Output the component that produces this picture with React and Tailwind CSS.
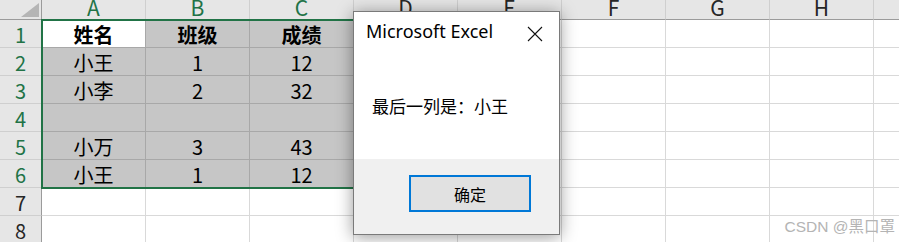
import React from "react";

const cols = ["A", "B", "C", "D", "E", "F", "G", "H", "I"];
const data = {
  1: ["姓名", "班级", "成绩"],
  2: ["小王", "1", "12"],
  3: ["小李", "2", "32"],
  4: ["", "", ""],
  5: ["小万", "3", "43"],
  6: ["小王", "1", "12"],
  7: ["", "", ""],
  8: ["", "", ""],
};

const cellFont = { fontFamily: '"Noto Sans CJK SC", "Noto Sans", sans-serif' };

function Cell({ r, c }) {
  const selected = r >= 1 && r <= 6 && c <= 3;
  const active = r === 1 && c === 0;
  const text = c < 3 ? data[r][c] : "";
  const bold = r === 1;
  let cls =
    "w-[104px] h-[28px] shrink-0 border-r border-b text-center text-[20px] leading-[28px] pt-[1px] text-black overflow-hidden ";
  if (active) cls += "bg-white border-[#a8a8a8]";
  else if (selected) cls += "bg-[#c6c6c6] border-[#a8a8a8]";
  else cls += "bg-white border-[#d9d9d9]";
  if (bold) cls += " font-bold";
  return (
    <div className={cls} style={cellFont}>
      {text}
    </div>
  );
}

export default function App() {
  return (
    <div className="relative w-[899px] h-[242px] overflow-hidden bg-white" style={cellFont}>
      {/* column header row */}
      <div className="flex h-[20px]">
        <div className="w-[42px] h-[20px] shrink-0 bg-[#e6e6e6] border-r border-b border-[#9b9b9b] relative">
          <svg className="absolute left-0 top-0" width="42" height="20" viewBox="0 0 42 20">
            <polygon points="39,3 39,17 21,17" fill="#b5b5b5" />
          </svg>
        </div>
        {cols.map((c, i) => (
          <div
            key={c}
            className={
              "w-[104px] h-[20px] shrink-0 bg-[#e6e6e6] border-r border-r-[#cfcfcf] border-b border-b-[#9b9b9b] text-center text-[21px] leading-[20px] " +
              (i <= 2 ? "text-[#217346]" : "text-[#262626]")
            }
          >
            <span className="relative -top-[3px]">{c}</span>
          </div>
        ))}
      </div>
      {/* rows */}
      {[1, 2, 3, 4, 5, 6, 7, 8].map((r) => (
        <div key={r} className="flex h-[28px]">
          <div
            className={
              "w-[42px] h-[28px] shrink-0 bg-[#e6e6e6] border-r border-r-[#9b9b9b] border-b border-b-[#cfcfcf] text-center text-[20px] leading-[28px] pt-[1px] " +
              (r <= 6 ? "text-[#217346]" : "text-[#262626]")
            }
          >
            {r}
          </div>
          {cols.map((c, i) => (
            <Cell key={c} r={r} c={i} />
          ))}
        </div>
      ))}

      {/* selection border */}
      <div className="absolute left-[41px] top-[19px] w-[420px] h-[170px] border-2 border-[#217346]" />

      {/* watermark */}
      <div
        className="absolute right-[4px] top-[217px] text-[15.5px] leading-[20px] text-[#b4b4b4]"
        style={{ fontFamily: '"Liberation Sans", "Noto Sans CJK SC", sans-serif' }}
      >
        CSDN @黑口罩
      </div>

      {/* dialog */}
      <div className="absolute left-[353px] top-[11px] w-[207px] h-[224px] bg-white border border-[#7a7a7a] shadow-[0_2px_16px_rgba(0,0,0,0.4)] flex flex-col">
        <div className="h-[147px] flex flex-col bg-white">
          <div className="flex items-start justify-between pl-[12px] pr-[16px] pt-[9px]">
            <span
              className="text-[18px] leading-[20px] text-black"
              style={{ fontFamily: '"Noto Sans", sans-serif' }}
            >
              Microsoft Excel
            </span>
            <svg className="mt-[5px]" width="16" height="16" viewBox="0 0 16 16">
              <path d="M1 1 L15 15 M15 1 L1 15" stroke="#111" strokeWidth="1.1" fill="none" />
            </svg>
          </div>
          <div className="pl-[18px] mt-[54px] text-[17px] leading-[20px] text-black" style={cellFont}>
            最后一列是：小王
          </div>
        </div>
        <div className="flex-1 bg-[#f0f0f0] flex justify-end items-start pt-[16px] pr-[28px]">
          <div
            className="w-[122px] h-[37px] border-2 border-[#0078d7] bg-[#e1e1e1] flex items-center justify-center text-[16px] text-black"
            style={cellFont}
          >
            确定
          </div>
        </div>
      </div>
    </div>
  );
}
